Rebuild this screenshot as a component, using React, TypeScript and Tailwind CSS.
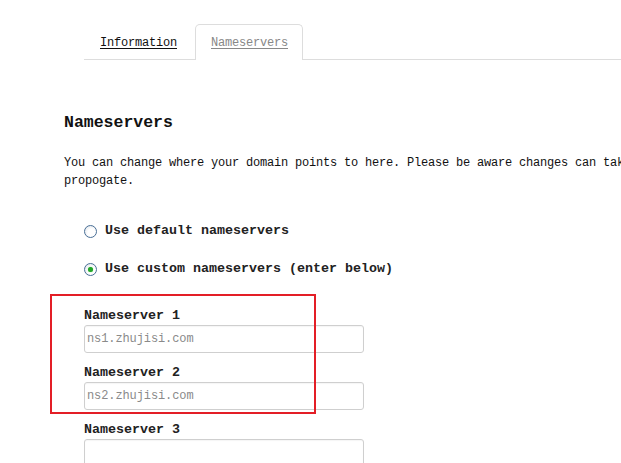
import React from "react";

const mono = "font-['Liberation_Mono','DejaVu_Sans_Mono',monospace]";

function Radio({ checked }: { checked?: boolean }) {
  return (
    <span className="relative flex h-[13px] w-[13px] shrink-0 items-center justify-center rounded-full border border-[#4a6f96] bg-[radial-gradient(circle_at_60%_60%,#ffffff_40%,#d6dde6_100%)]">
      {checked && <span className="h-[5px] w-[5px] rounded-full bg-[#22a52a] shadow-[0_0_1px_#5fd35f]" />}
    </span>
  );
}

function Field({ label, placeholder, mt }: { label: string; placeholder?: string; mt: string }) {
  return (
    <div className={mt}>
      <div className="h-[20px] text-[13.33px] font-bold leading-[24px] text-[#222]">{label}</div>
      <div className="mt-[1px] flex h-[28px] w-[280px] items-center rounded-[3px] border border-[#cfcfcf] bg-white pl-[2px] shadow-[inset_0_1px_1px_rgba(0,0,0,0.04)]">
        {placeholder && <span className="text-[12px] tracking-[-0.1px] text-[#8a8a8a]">{placeholder}</span>}
      </div>
    </div>
  );
}

export default function App() {
  return (
    <div className={`relative h-[463px] w-[621px] overflow-hidden bg-white text-[#111] ${mono}`}>
      {/* tabs */}
      <div className="ml-[84px] flex border-b border-[#dddddd] pt-[24px]">
        <div className="flex h-[35px] w-[111px] items-center pl-[16px] pt-[2px]">
          <span className="text-[12px] tracking-[-0.2px] text-[#111] underline underline-offset-[2px]">Information</span>
        </div>
        <div className="-mb-px flex h-[36px] w-[108px] items-center rounded-t-[5px] border border-b-0 border-[#dddddd] bg-white pl-[15px] pt-[1px]">
          <span className="text-[12px] tracking-[-0.2px] text-[#888] underline underline-offset-[2px]">Nameservers</span>
        </div>
      </div>

      <div className="pl-[64px]">
        <h2 className="mt-[53px] h-[20px] text-[16.5px] font-bold leading-[20px] text-[#111]">Nameservers</h2>
        <p className="mt-[21px] w-[700px] text-[12px] leading-[18px] tracking-[-0.2px] text-[#111]">
          You can change where your domain points to here. Please be aware changes can take up to 48 hours to
          <br />
          propogate.
        </p>

        <div className="pl-[20px]">
          <div className="mt-[31px] flex h-[20px] items-center gap-[8px]">
            <Radio />
            <span className="text-[13.33px] font-bold leading-[20px] text-[#222]">Use default nameservers</span>
          </div>
          <div className="mt-[18px] flex h-[20px] items-center gap-[8px]">
            <Radio checked />
            <span className="text-[13.33px] font-bold leading-[20px] text-[#222]">Use custom nameservers (enter below)</span>
          </div>

          <Field label="Nameserver 1" placeholder="ns1.zhujisi.com" mt="mt-[25px]" />
          <Field label="Nameserver 2" placeholder="ns2.zhujisi.com" mt="mt-[8px]" />
          <Field label="Nameserver 3" mt="mt-[8px]" />
        </div>
      </div>

      {/* annotation box */}
      <div className="absolute left-[50px] top-[294px] h-[120px] w-[266px] border-2 border-[#e31e26]" />
    </div>
  );
}
